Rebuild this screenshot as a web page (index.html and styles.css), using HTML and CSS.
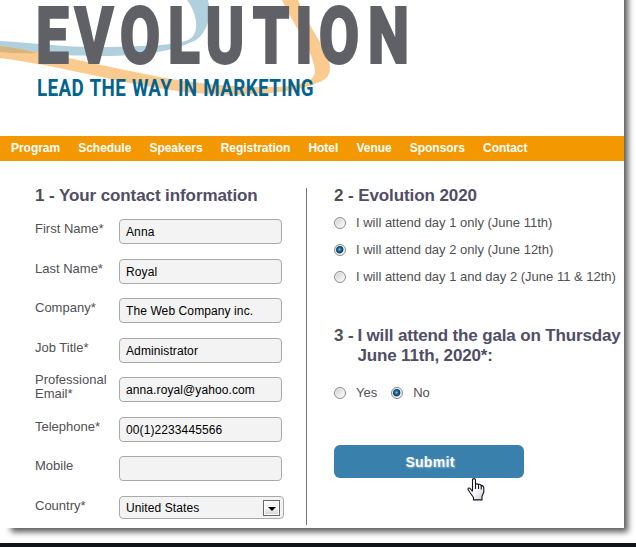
FILE: index.html
```html
<!DOCTYPE html>
<html lang="en">
<head>
<meta charset="utf-8">
<title>Evolution - Registration</title>
<link rel="stylesheet" href="styles.css">
</head>
<body>
<div class="page">
  <header class="banner">
    <svg class="logo" width="624" height="136" viewBox="0 0 624 136">
      <path fill="#b0d0dd" d="M0 41C36 43 70 48 110 47C145 46 177 46 190 39C201 31 196 12 187 0H208C212 17 207 32 196 40C174 51 148 55 110 56C70 56 42 54 0 53Z"/>
      <path fill="#fbca8f" d="M0 46C58 54 107 67 150 75C190 83 233 88 276 87C303 85 319 82 314 65C309 44 292 22 282 0H298C307 24 322 42 328 59C333 72 328 80 317 83C291 95 228 97 185 92C125 85 58 65 0 58Z"/>
      <path fill="#d2b581" d="M0 46Q20 48 37 53Q18 54 0 52Z"/>
      <text class="logo-name" transform="translate(0 62.2) scale(.76 1)" x="68.8 123.7 184.2 241.8 296 356.6 400 446 511.2">EVOLUTION</text>
      <text class="logo-tag" x="37" y="96" textLength="277" lengthAdjust="spacingAndGlyphs">LEAD THE WAY IN MARKETING</text>
    </svg>
  </header>
  <nav class="menu">
    <a>Program</a><a>Schedule</a><a>Speakers</a><a>Registration</a><a>Hotel</a><a>Venue</a><a>Sponsors</a><a>Contact</a>
  </nav>
  <main class="columns">
    <section class="contact">
      <h2><span class="num">1 -</span> Your contact information</h2>
      <div class="row"><label>First Name*</label><input value="Anna"></div>
      <div class="row"><label>Last Name*</label><input value="Royal"></div>
      <div class="row"><label>Company*</label><input value="The Web Company inc."></div>
      <div class="row"><label>Job Title*</label><input value="Administrator"></div>
      <div class="row"><label class="two">Professional Email*</label><input class="email" value="anna.royal@yahoo.com"></div>
      <div class="row"><label>Telephone*</label><input value="00(1)2233445566"></div>
      <div class="row"><label>Mobile</label><input value=""></div>
      <div class="row"><label>Country*</label><div class="select"><span>United States</span><i class="arrow"></i></div></div>
    </section>
    <section class="options">
      <h2><span class="num">2 -</span> Evolution 2020</h2>
      <div class="choice"><i class="radio"></i>I will attend day 1 only (June 11th)</div>
      <div class="choice"><i class="radio on"></i>I will attend day 2 only (June 12th)</div>
      <div class="choice"><i class="radio"></i>I will attend day 1 and day 2 (June 11 &amp; 12th)</div>
      <h2 class="gala"><span class="num">3 -</span><span>I will attend the gala on Thursday<br>June 11th, 2020*:</span></h2>
      <div class="answers"><div class="choice"><i class="radio"></i>Yes</div><div class="choice"><i class="radio on"></i>No</div></div>
      <button class="submit">Submit</button>
      <svg class="hand" width="18" height="23" viewBox="0 0 18 23">
        <defs><linearGradient id="g" x2="1" y2="1"><stop offset=".5" stop-color="#fff"/><stop offset="1" stop-color="#ccc"/></linearGradient></defs>
        <path fill="url(#g)" stroke="#111122" stroke-width="1.1" stroke-linejoin="round" d="M5.5 13.5V2Q5.5 .6 7 .6T8.5 2V6.5Q9.2 5.4 11.5 6.4Q13 6 14 7.4Q16 7.2 16.8 9.5V14L15 18.5V21.9H6.5V19.5L3 14.5L1 11.5Q.8 9.5 3 10.3L5.5 13.5M8.5 6V11M11.5 6.5V11M14.2 7.5V11.5"/>
      </svg>
    </section>
  </main>
</div>
<div class="bottom-bar"></div>
</body>
</html>
```

FILE: styles.css
```css
* { box-sizing: border-box; }
body {
  margin: 0;
  height: 547px;
  overflow: hidden;
  display: flex;
  flex-direction: column;
  justify-content: space-between;
  background: #fff;
  font-family: "Liberation Sans", Arial, sans-serif;
  color: #505055;
}
.page {
  position: relative;
  z-index: 0;
  width: 624px;
  height: 528px;
}
.page::before {
  content: "";
  position: absolute;
  z-index: -1;
  inset: -20px 0 0 9px;
  background: #fff;
  box-shadow: 3px 3px 6px 1px rgba(0, 0, 0, .65);
}
.page::after {
  content: "";
  position: absolute;
  z-index: -1;
  inset: 0;
  background: #fff;
}
.banner { height: 136px; }
.logo { display: block; }
.logo-name {
  font: 700 75.5px/1 Roboto, sans-serif;
  fill: #606166;
  stroke: #606166;
  stroke-width: 3.8;
  text-anchor: middle;
}
.logo-tag { font: 700 24.5px/1 Roboto, sans-serif; letter-spacing: .5px; word-spacing: 1px; fill: #00638f; }
.menu {
  display: flex;
  gap: 18.2px;
  height: 25px;
  padding-left: 11px;
  background: #f39800;
  color: #fff;
  font: bold 12px/24px "Liberation Sans", Arial, sans-serif;
  letter-spacing: -.04px;
}
.columns { display: flex; height: 367px; padding: 27px 0 0 35px; }
h2 {
  margin: 0;
  height: 31px;
  font-size: 17px;
  line-height: 16px;
  letter-spacing: -.09px;
  color: #504d66;
  white-space: nowrap;
}
.num { color: #505050; }
.contact {
  width: 272px;
  height: 337px;
  border-right: 1px solid #777;
}
.row {
  display: flex;
  height: 39.5px;
}
label {
  width: 84px;
  padding-top: 3.4px;
  font-size: 13px;
  line-height: 14px;
}
.two { margin-top: -7px; }
input, .select {
  width: 163px;
  height: 25px;
  padding: 1px 6px 0;
  border: 1px solid #a9a9a9;
  border-radius: 4px;
  background: #f3f3f3;
  color: #000;
  font: 12px "Liberation Sans", Arial, sans-serif;
  letter-spacing: .1px;
}
.select {
  display: flex;
  justify-content: space-between;
  align-items: center;
  width: 165px;
  height: 23px;
  padding: 1px 3px 0 6px;
}
.arrow {
  display: grid;
  place-items: center;
  width: 17px;
  height: 16px;
  border: 1px solid #666;
  background: linear-gradient(#f7f7f7 50%, #cfcfcf);
  box-shadow: inset 0 0 0 1px #fff;
}
.arrow::after {
  content: "";
  margin-top: 3px;
  border: 4px solid transparent;
  border-top-color: #000;
  border-bottom: 0;
}
.options { position: relative; width: 317px; padding-left: 27px; }
.options h2 { height: 21px; }
.choice {
  display: flex;
  align-items: center;
  gap: 10px;
  height: 27px;
  font-size: 13px;
  white-space: nowrap;
}
.radio {
  flex: none;
  width: 12px;
  height: 12px;
  border: 1px solid #8c8c8c;
  border-radius: 50%;
  background: linear-gradient(135deg, #c8cbd0, #f8f8f8 80%);
  box-shadow: inset 0 0 0 1px #f3f3f3;
}
.on { background: radial-gradient(circle at 45% 45%, #71c8ef 0, #1979ae 1.5px, #123752 3.4px, #eee 4.4px); }
.options .gala { display: flex; gap: 4px; height: 53px; margin-top: 36px; line-height: 20px; letter-spacing: -.15px; }
.answers { display: flex; gap: 14px; }
.submit {
  display: block;
  width: 190px;
  height: 33px;
  margin-top: 39px;
  padding: 0 0 0 2px;
  border: 0;
  border-radius: 6px;
  background: #3980ad;
  color: #fff;
  font: bold 14px "Liberation Sans", Arial, sans-serif;
  letter-spacing: .3px;
  text-shadow: 1px 1px 2px #8fb5cf;
}
.hand { position: absolute; left: 160px; top: 290px; }
.bottom-bar { height: 4px; background: #111418; }
```
